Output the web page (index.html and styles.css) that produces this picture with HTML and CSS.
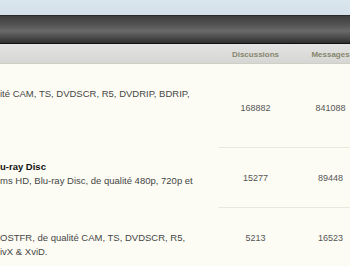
FILE: index.html
```html
<!DOCTYPE html>
<html>
<head>
  <meta charset="utf-8">
  <link rel="stylesheet" href="styles.css">
</head>
<body>

  <div class="sky"></div>
  <div class="navbar"></div>

  <table class="forums">
    <colgroup>
      <col class="col-forum">
      <col class="col-stat">
      <col class="col-stat">
    </colgroup>
    <thead>
      <tr>
        <th></th>
        <th>Discussions</th>
        <th>Messages</th>
      </tr>
    </thead>
    <tbody>
      <tr class="row-first">
        <td class="forum forum-untitled">
          <p class="forum-desc">ité CAM, TS, DVDSCR, R5, DVDRIP, BDRIP,</p>
        </td>
        <td class="stat">168882</td>
        <td class="stat">841088</td>
      </tr>
      <tr class="row-mid">
        <td class="forum">
          <p class="forum-title">u-ray Disc</p>
          <p class="forum-desc">ms HD, Blu-ray Disc, de qualité 480p, 720p et</p>
        </td>
        <td class="stat">15277</td>
        <td class="stat">89448</td>
      </tr>
      <tr class="row-last">
        <td class="forum forum-untitled">
          <p class="forum-desc">OSTFR, de qualité CAM, TS, DVDSCR, R5,<br>ivX &amp; XviD.</p>
        </td>
        <td class="stat">5213</td>
        <td class="stat">16523</td>
      </tr>
    </tbody>
  </table>

</body>
</html>
```

FILE: styles.css
```css
body {
  margin: 0;
  overflow: hidden;
  background-color: #fcfcf4;
  font-family: "Liberation Sans", Arial, sans-serif;
}

/* Pale strip above the menu bar */
.sky {
  height: 15px;
  background: linear-gradient(to bottom, #dbe6ee, #d3e0ea);
}

.navbar {
  height: 27px;
  border-top: 1px solid #2a2a2a;
  border-bottom: 1px solid #111;
  background: linear-gradient(to bottom, #3e3e3e 0%, #555 35%, #6a6a6a 55%, #4a4a4a 80%, #2e2e2e 100%);
}

.forums {
  width: 368px;
  table-layout: fixed;
  border-collapse: collapse;
}

.col-forum {
  width: 218px;
}

.col-stat {
  width: 75px;
}

.forums th {
  height: 18px;
  padding: 1px 0 0 0;
  border-bottom: 1px solid #cfcfc6;
  background: linear-gradient(to bottom, #e3e3e3, #d6d6d4);
  color: #86866c;
  font-size: 8px;
  font-weight: bold;
  text-align: center;
}

.forums td {
  padding: 0;
  color: #454545;
  font-size: 9.5px;
}

.forums td.forum {
  vertical-align: top;
  padding-top: 11px;
}

.forums td.forum-untitled {
  padding-top: 23px;
}

.forums td.stat {
  text-align: center;
  vertical-align: middle;
  color: #555;
  font-size: 9px;
}

.row-first {
  height: 84px;
}

.row-first td.stat {
  padding-top: 4px;
}

.row-mid,
.row-last {
  height: 60px;
}

.row-mid td.stat,
.row-last td.stat {
  border-top: 1px solid #e6e9de;
}

.forum-title {
  margin: 0;
  line-height: 15px;
  color: #111;
  font-size: 9.5px;
  font-weight: bold;
}

.forum-desc {
  margin: 0;
  line-height: 14px;
}
```
